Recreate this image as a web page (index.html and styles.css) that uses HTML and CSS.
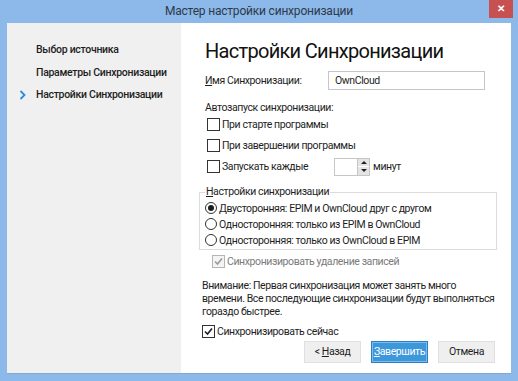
FILE: index.html
```html
<!DOCTYPE html>
<html lang="ru">
<head>
    <meta charset="UTF-8">
    <title>Мастер настройки синхронизации</title>
    <link rel="stylesheet" href="styles.css">
</head>
<body>
    <div class="window">
        <div class="titlebar">
            <span></span>
            <span class="title">Мастер настройки синхронизации</span>
            <div class="close-btn">&#x2715;</div>
        </div>

        <div class="content">
            <div class="sidebar">
                <div class="step">Выбор источника</div>
                <div class="step">Параметры Синхронизации</div>
                <div class="step active">
                    <svg class="chevron" width="7" height="10" viewBox="0 0 7 10">
                        <polyline points="1.5,1 5.5,5 1.5,9" fill="none" stroke="#2b8ae2" stroke-width="1.8"/>
                    </svg>
                    Настройки Синхронизации
                </div>
            </div>

            <div class="main">
                <h1>Настройки Синхронизации</h1>

                <div class="name-row">
                    <span class="name-label"><u>И</u>мя Синхронизации:</span>
                    <div class="text-input">OwnCloud</div>
                </div>

                <div class="section-label">Автозапуск синхронизации:</div>
                <div class="check-row indent"><span class="check"></span>При старте программы</div>
                <div class="check-row indent"><span class="check"></span>При завершении программы</div>
                <div class="check-row indent">
                    <span class="check"></span>
                    <span class="every-label">Запускать каждые</span>
                    <div class="spin">
                        <div class="spin-field"></div>
                        <div class="spin-buttons">
                            <div class="spin-btn"><span class="arrow-up"></span></div>
                            <div class="spin-btn"><span class="arrow-down"></span></div>
                        </div>
                    </div>
                    <span class="unit">минут</span>
                </div>

                <fieldset class="group">
                    <legend><u>Н</u>астройки синхронизации</legend>
                    <div class="radio-row"><span class="radio checked"></span>Двусторонняя: EPIM и OwnCloud друг с другом</div>
                    <div class="radio-row"><span class="radio"></span>Односторонняя: только из EPIM в OwnCloud</div>
                    <div class="radio-row"><span class="radio"></span>Односторонняя: только из OwnCloud в EPIM</div>
                </fieldset>

                <div class="check-row disabled">
                    <span class="check checked">
                        <svg width="9" height="9" viewBox="0 0 9 9"><polyline points="1,4.5 3.5,7 8,1.5" fill="none" stroke="#9a9a9a" stroke-width="1.6"/></svg>
                    </span>
                    Синхронизировать удаление записей
                </div>

                <p class="notice">Внимание: Первая синхронизация может занять много<br>времени. Все последующие синхронизации будут выполняться<br>гораздо быстрее.</p>

                <div class="check-row sync-now">
                    <span class="check checked">
                        <svg width="9" height="9" viewBox="0 0 9 9"><polyline points="1,4.5 3.5,7 8,1.5" fill="none" stroke="#1e1e1e" stroke-width="1.6"/></svg>
                    </span>
                    Синхронизировать сейчас
                </div>

                <div class="buttons">
                    <div class="btn">&lt; <u>Н</u>азад</div>
                    <div class="btn primary"><u>З</u>авершить</div>
                    <div class="btn">Отмена</div>
                </div>
            </div>
        </div>
    </div>
</body>
</html>
```

FILE: styles.css
```css
* {
    box-sizing: border-box;
}

body {
    margin: 0;
    font-family: Roboto, "Liberation Sans", sans-serif;
    font-size: 10.5px;
    letter-spacing: -0.4px;
    color: #1e1e1e;
}

.window {
    width: 518px;
    height: 381px;
    background: #8cb8ea;
    padding: 0 7px 7px;
    display: flex;
    flex-direction: column;
}

.titlebar {
    height: 23px;
    display: grid;
    grid-template-columns: 1fr auto 1fr;
    align-items: start;
}

.title {
    font-size: 12px;
    letter-spacing: -0.2px;
    line-height: 23px;
    color: #2d3a48;
}

.close-btn {
    justify-self: end;
    margin-right: -2px;
    width: 24px;
    height: 18px;
    background: #c75050;
    color: #fff;
    font-size: 10px;
    font-weight: bold;
    line-height: 18px;
    text-align: center;
}

.content {
    flex: 1;
    display: flex;
    overflow: hidden;
    background: #fff;
    border-bottom: 1px solid #7fa9dc;
}

/* left steps list */
.sidebar {
    width: 174px;
    flex-shrink: 0;
    background: #f0f0f0;
    padding-top: 16px;
}

.step {
    position: relative;
    padding-left: 29px;
    height: 22.5px;
    line-height: 22px;
    font-weight: 500;
    letter-spacing: -0.3px;
    white-space: nowrap;
}

.chevron {
    position: absolute;
    left: 12px;
    top: 6px;
}

/* right page */
.main {
    flex: 1;
    min-width: 0;
    padding: 14px 14px 0 18px;
}

h1 {
    margin: 0 0 0 6px;
    font-size: 20px;
    letter-spacing: -0.7px;
    font-weight: normal;
    line-height: 28px;
    color: #111;
}

.name-row {
    display: flex;
    align-items: center;
    margin: 6px 0 0 6px;
    height: 19px;
}

.name-label {
    width: 123px;
}

.text-input {
    width: 157px;
    height: 19px;
    border: 1px solid #c6c6c6;
    padding-left: 6px;
    line-height: 17px;
}

.section-label {
    margin: 12px 0 0 6px;
    height: 12px;
    line-height: 12px;
}

.check-row {
    display: flex;
    align-items: center;
    height: 21px;
    white-space: nowrap;
}

.indent {
    margin-left: 8px;
}

.check {
    width: 13px;
    height: 13px;
    border: 1px solid #333;
    background: #fff;
    margin-right: 2px;
    display: flex;
    align-items: center;
    justify-content: center;
    flex-shrink: 0;
}

.every-label {
    width: 112px;
}

.spin {
    display: flex;
    height: 18px;
}

.spin-field {
    width: 24px;
    border: 1px solid #c6c6c6;
}

.spin-buttons {
    width: 12px;
    display: flex;
    flex-direction: column;
    gap: 1px;
    border: 1px solid #c6c6c6;
    border-left: none;
    background: #fff;
}

.spin-btn {
    flex: 1;
    background: #e4e4e4;
    display: flex;
    align-items: center;
    justify-content: center;
}

.arrow-up {
    border-left: 3px solid transparent;
    border-right: 3px solid transparent;
    border-bottom: 3px solid #222;
}

.arrow-down {
    border-left: 3px solid transparent;
    border-right: 3px solid transparent;
    border-top: 3px solid #222;
}

.unit {
    margin-left: 3px;
}

.group {
    margin: 8px 0 0;
    width: 298px;
    padding: 1px 0 1px 5px;
    border: 1px solid #dcdcdc;
}

.group legend {
    padding: 0 1px;
    height: 14px;
    line-height: 14px;
}

.radio-row {
    display: flex;
    align-items: center;
    height: 16px;
    white-space: nowrap;
}

.radio {
    width: 12px;
    height: 12px;
    border: 1px solid #333;
    border-radius: 50%;
    margin-right: 2px;
    display: flex;
    align-items: center;
    justify-content: center;
}

.radio.checked::after {
    content: "";
    width: 6px;
    height: 6px;
    border-radius: 50%;
    background: #1e1e1e;
}

.disabled {
    margin: 3px 0 0 13px;
    height: 16px;
    color: #7a7a7a;
}

.disabled .check {
    border-color: #b5b5b5;
    background: #f4f4f4;
}

.notice {
    margin: 10px 0 0 3px;
    line-height: 13px;
    white-space: nowrap;
}

.sync-now {
    margin: 5px 0 0 3px;
    height: 16px;
}

.buttons {
    display: flex;
    justify-content: flex-end;
    gap: 10px;
    margin-top: 2px;
    padding-right: 2px;
}

.btn {
    width: 57px;
    height: 22px;
    line-height: 20px;
    text-align: center;
    background: #efefef;
    border: 1px solid #e0e0e0;
}

.btn.primary {
    background: #3d97db;
    border-color: #2d7fc4;
    box-shadow: inset 0 0 0 1px #7dbbea;
    color: #fff;
}
```
